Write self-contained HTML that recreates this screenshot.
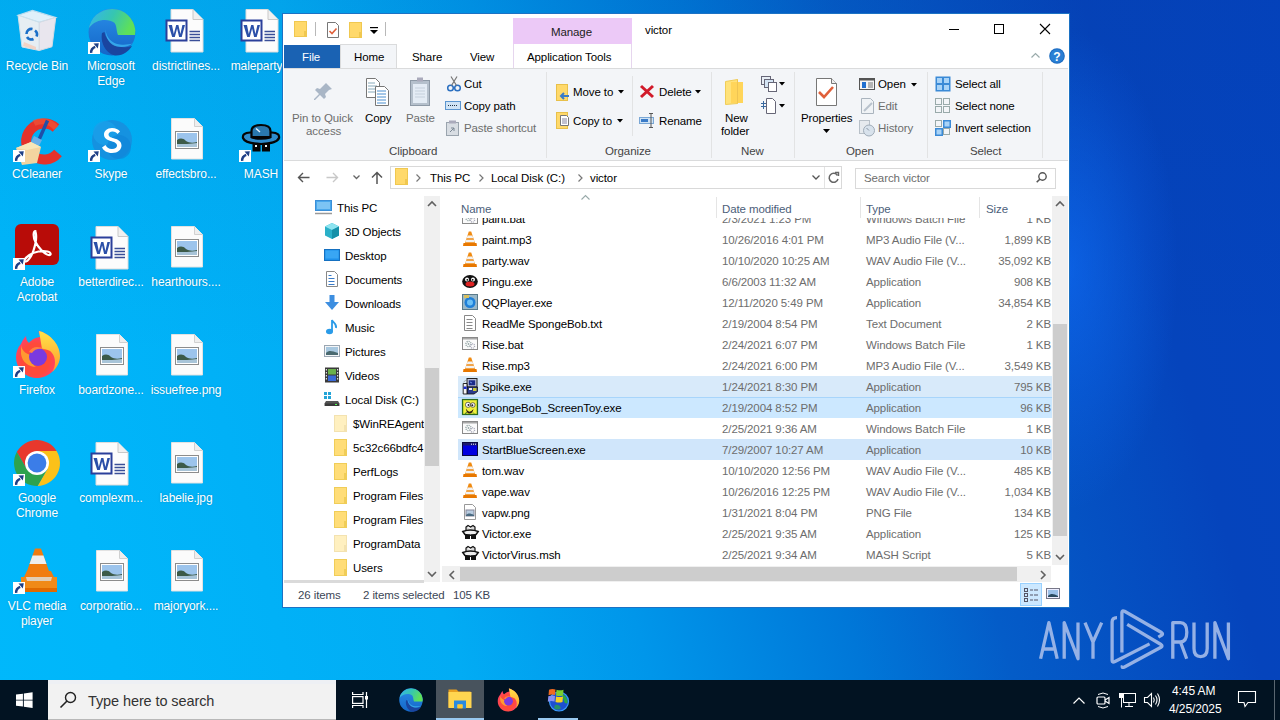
<!DOCTYPE html>
<html><head><meta charset="utf-8"><style>
*{box-sizing:border-box;margin:0;padding:0}
html,body{width:1280px;height:720px;overflow:hidden}
body{position:relative;font-family:"Liberation Sans",sans-serif;font-size:12px;color:#000;
background:radial-gradient(ellipse 110px 240px at 1068px 270px,rgba(16,110,250,.6),rgba(16,110,250,0) 100%),linear-gradient(to bottom,rgba(0,30,90,.06),rgba(0,0,0,0) 50%),linear-gradient(75deg,#00b8fb 0%,#00b6fa 9%,#02acf4 32%,#0096ea 45%,#0077d8 59.4%,#045cc8 69.6%,#0544bc 86.6%,#0444c0 100%)}
.a{position:absolute}
.t{position:absolute;white-space:nowrap;line-height:14px;font-size:11.5px;letter-spacing:-0.1px}
.dl{position:absolute;white-space:nowrap;color:#fff;font-size:12px;line-height:15px;text-align:center;width:76px;letter-spacing:-0.1px;text-shadow:0 0 2px rgba(0,0,0,.22)}
.g{color:#6d6d6d}
.sel{position:absolute;background:#cde8fd}
svg{position:absolute;overflow:visible}
</style></head><body>
<svg style="left:14px;top:8px" width="44" height="46" viewBox="0 0 44 46"><path d="M4 7.2L18.5 2.4 41.75 9.5 25.25 14.4z" fill="#dff0fa" stroke="#b8dcef" stroke-width="1.2"/><path d="M4 7.2L25.25 14.4 25.25 42.5 8 39z" fill="#e6eef3" stroke="#cfe0ea"/><path d="M25.25 14.4L41.75 9.5 38 38.75 25.25 42.5z" fill="#e9e6ee" stroke="#d6dbe4"/><path d="M10 34l12 5v3L9 38z" fill="#f6c8b0" opacity=".7"/><g fill="none" stroke="#1a6fc8" stroke-width="2.6"><path d="M12.5 26a5 5 0 0 1 6-5"/><path d="M21 22.5a5 5 0 0 1 1.5 6"/><path d="M19.5 31a5 5 0 0 1-6.5-2"/></g></svg>
<div class="dl" style="left:-3px;width:80px;top:58.75px">Recycle Bin</div>
<svg style="left:14px;top:118px" width="48" height="46" viewBox="0 0 48 46"><path d="M42 10A18 18 0 1 0 44 35" stroke="#e5322a" stroke-width="10" fill="none"/><path d="M42 10A18 18 0 0 0 20 5" stroke="#f05a3a" stroke-width="6" fill="none" opacity=".6"/><path d="M33.5 2.5L24 24" stroke="#1f4fa8" stroke-width="3.4"/><path d="M20 18l8 4-3 6-8-4z" fill="#6ab0e8"/><path d="M2 30l15-6 10 5-4 16-15 2z" fill="#f3d4a0"/><path d="M2 30l15-6 10 5-14 3z" fill="#f8e6b8"/></svg>
<svg style="left:13px;top:150px" width="12" height="12" viewBox="0 0 12 12"><rect x="0" y="0" width="12" height="12" fill="#fff"/><path d="M3.2 10.8Q2.8 6.5 7.2 4.8" stroke="#1e3f86" stroke-width="2.4" fill="none"/><path d="M5.5 1.5L10.8 1.2 9.8 6.5z" fill="#1e3f86"/></svg>
<div class="dl" style="left:-3px;width:80px;top:166.75px">CCleaner</div>
<svg style="left:15px;top:224px" width="44" height="42" viewBox="0 0 44 42"><rect x="0" y="0" width="44" height="41" rx="6" fill="#b80c08"/><path d="M20.5 7c-2.5 0-2.5 6 0 11s8.5 12 13 13c3 .5 3-2.5-1-3.5-5-1.2-13 0-18 3.5s-6 6-4 6.5 6-5 8-11 3-12 2.5-16c-.2-1.5-.7-3.5-.5-3.5z" fill="none" stroke="#fff" stroke-width="2.2" stroke-linejoin="round"/></svg>
<svg style="left:13px;top:258px" width="12" height="12" viewBox="0 0 12 12"><rect x="0" y="0" width="12" height="12" fill="#fff"/><path d="M3.2 10.8Q2.8 6.5 7.2 4.8" stroke="#1e3f86" stroke-width="2.4" fill="none"/><path d="M5.5 1.5L10.8 1.2 9.8 6.5z" fill="#1e3f86"/></svg>
<div class="dl" style="left:-3px;width:80px;top:274.75px">Adobe</div>
<div class="dl" style="left:-3px;width:80px;top:289.75px">Acrobat</div>
<svg style="left:15px;top:330px" width="46" height="47" viewBox="0 0 46 47"><defs><radialGradient id="ffr" cx=".45" cy=".6" r=".6"><stop offset=".55" stop-color="#ff4a3a"/><stop offset="1" stop-color="#ff3b8a"/></radialGradient><linearGradient id="ffy" x1="0" y1="0" x2="0" y2="1"><stop offset="0" stop-color="#ffe44a"/><stop offset="1" stop-color="#ff9a2a"/></linearGradient></defs><path d="M6 14c2-5 5-8 5-8 0 4 2 6 3 7 3-4 8-6 12-6-2-3-3-5-2-6 9 2 20 12 20 25 0 12-10 22-22 22S1 38 1 27c0-5 2-10 5-13z" fill="url(#ffr)"/><path d="M24 1c9 2 21 12 21 25 0 6-3 12-8 16 4-6 4-14 0-19-2-3-6-4-10-4z" fill="url(#ffy)"/><path d="M6 15c1 8 9 11 14 10-4 3-4 9 1 12-7 0-14-5-15-13z" fill="#ff9a30"/><circle cx="23" cy="27" r="9" fill="#7a3ae0"/><path d="M14 22c3-6 10-6 15-3-5-1-10 0-12 4z" fill="#ff8040"/></svg>
<svg style="left:13px;top:366px" width="12" height="12" viewBox="0 0 12 12"><rect x="0" y="0" width="12" height="12" fill="#fff"/><path d="M3.2 10.8Q2.8 6.5 7.2 4.8" stroke="#1e3f86" stroke-width="2.4" fill="none"/><path d="M5.5 1.5L10.8 1.2 9.8 6.5z" fill="#1e3f86"/></svg>
<div class="dl" style="left:-3px;width:80px;top:382.75px">Firefox</div>
<svg style="left:13px;top:439px" width="48" height="48" viewBox="0 0 48 48"><path d="M24.00 12.00L43.62 12.00A23 23 0 0 0 3.80 13.01L13.61 30.00z" fill="#e8382c"/><path d="M34.39 30.00L24.58 46.99A23 23 0 0 0 43.62 12.00L24.00 12.00z" fill="#fbc119"/><path d="M13.61 30.00L3.80 13.01A23 23 0 0 0 24.58 46.99L34.39 30.00z" fill="#2ea24e"/><circle cx="24" cy="24" r="12" fill="#fff"/><circle cx="24" cy="24" r="9.4" fill="#3b7de8"/></svg>
<svg style="left:13px;top:474px" width="12" height="12" viewBox="0 0 12 12"><rect x="0" y="0" width="12" height="12" fill="#fff"/><path d="M3.2 10.8Q2.8 6.5 7.2 4.8" stroke="#1e3f86" stroke-width="2.4" fill="none"/><path d="M5.5 1.5L10.8 1.2 9.8 6.5z" fill="#1e3f86"/></svg>
<div class="dl" style="left:-3px;width:80px;top:490.75px">Google</div>
<div class="dl" style="left:-3px;width:80px;top:505.75px">Chrome</div>
<svg style="left:21px;top:547px" width="36" height="46" viewBox="0 0 36 46"><path d="M14 1.5h6l11 31H3z" fill="#f07c10"/><path d="M11.5 8.5h11l3 8.5h-17z" fill="#eee"/><path d="M7.5 24.5h19l2.5 9H5z" fill="#eee"/><path d="M0 30h36v15H0z" fill="#f08a18"/><path d="M3 30l3-6h24l3 6z" fill="#f07c10"/><path d="M5 30h26l-1 4H6z" fill="#ddd" opacity=".8"/><rect x="0" y="41" width="36" height="4" fill="#e06a00"/></svg>
<svg style="left:13px;top:582px" width="12" height="12" viewBox="0 0 12 12"><rect x="0" y="0" width="12" height="12" fill="#fff"/><path d="M3.2 10.8Q2.8 6.5 7.2 4.8" stroke="#1e3f86" stroke-width="2.4" fill="none"/><path d="M5.5 1.5L10.8 1.2 9.8 6.5z" fill="#1e3f86"/></svg>
<div class="dl" style="left:-3px;width:80px;top:598.75px">VLC media</div>
<div class="dl" style="left:-3px;width:80px;top:613.75px">player</div>
<svg style="left:88px;top:8px" width="48" height="48" viewBox="0 0 48 48"><defs><linearGradient id="eg1" x1="0" y1="0" x2="1" y2=".3"><stop offset="0" stop-color="#35b4f2"/><stop offset=".55" stop-color="#36c6b0"/><stop offset="1" stop-color="#5ee05a"/></linearGradient><linearGradient id="eg2" x1="0" y1="0" x2="0" y2="1"><stop offset="0" stop-color="#2a8ee8"/><stop offset="1" stop-color="#1466c8"/></linearGradient></defs><circle cx="24" cy="24" r="23.5" fill="url(#eg2)"/><path d="M.6 22A23.5 23.5 0 0 1 47.4 22.5L47 27H30C28 22 29 17 26 14.5 20 10 7 11 1 20z" fill="url(#eg1)"/><path d="M14 25C12 36 19 46 27 47.4 35 48 41 43 44 38 38 40 30 40 25 36 20 33 17 28 16.5 24z" fill="#1a45a0"/><path d="M17.5 21C18 30 24 35.5 32 36.5 37 37 41 36.5 44.5 35.5 41 38.5 35 39.5 29 38.5 22 37 17 30 17.5 21z" fill="#3ab0f0" opacity=".85"/></svg>
<svg style="left:88px;top:42px" width="12" height="12" viewBox="0 0 12 12"><rect x="0" y="0" width="12" height="12" fill="#fff"/><path d="M3.2 10.8Q2.8 6.5 7.2 4.8" stroke="#1e3f86" stroke-width="2.4" fill="none"/><path d="M5.5 1.5L10.8 1.2 9.8 6.5z" fill="#1e3f86"/></svg>
<div class="dl" style="left:71px;width:80px;top:58.75px">Microsoft</div>
<div class="dl" style="left:71px;width:80px;top:73.75px">Edge</div>
<svg style="left:90px;top:118px" width="44" height="44" viewBox="0 0 44 44"><circle cx="22" cy="22" r="20" fill="#1592e0"/><circle cx="15" cy="15" r="12" fill="#1aa0ea" opacity=".8"/><circle cx="29" cy="29" r="12" fill="#0f86d8" opacity=".7"/><path d="M30 13.5c-1.5-2-4.5-3.5-8-3.5-5 0-8 3-8 6.5 0 8 13 5.5 13 11 0 2-2 3.5-5 3.5-3.5 0-5.5-2-6.5-4l-3.5 2.5c1.5 3 5 5.5 10 5.5 6 0 9.5-3.5 9.5-7.5 0-8.5-13-6-13-11 0-1.5 1.5-3 4-3 2.5 0 4 1 5 2.5z" fill="#fff"/></svg>
<svg style="left:88px;top:150px" width="12" height="12" viewBox="0 0 12 12"><rect x="0" y="0" width="12" height="12" fill="#fff"/><path d="M3.2 10.8Q2.8 6.5 7.2 4.8" stroke="#1e3f86" stroke-width="2.4" fill="none"/><path d="M5.5 1.5L10.8 1.2 9.8 6.5z" fill="#1e3f86"/></svg>
<div class="dl" style="left:71px;width:80px;top:166.75px">Skype</div>
<svg style="left:90px;top:226px" width="40" height="44" viewBox="0 0 40 44"><path d="M6 .5h22l10 10v32.5H6z" fill="#fcfcfc" stroke="#dcdcdc"/><path d="M28 .5v10h10" fill="#f0f0f0" stroke="#c8c8c8"/><rect x="1.5" y="11.5" width="20" height="20" fill="#fff" stroke="#2b3f9a" stroke-width="2"/><path d="M3.5 16h3.5l1.8 9 2.4-9h2.2l2 9 2-9h2.6l-3.3 12h-2.6l-2-8.5-2.3 8.5H7.2z" fill="#2b4fa8"/><path d="M24.5 22.5h10.5M24.5 25.5h10.5M24.5 28.5h10.5M24.5 31.5h10.5" stroke="#3a4f98" stroke-width="1.3"/></svg>
<div class="dl" style="left:71px;width:80px;top:274.75px">betterdirec...</div>
<svg style="left:96px;top:334px" width="32" height="42" viewBox="0 0 32 42"><path d="M.5 .5h23l8 8v32.5H.5z" fill="#fbfbfb" stroke="#e2e2e2"/><path d="M23.5 .5v8h8" fill="#eee" stroke="#d0d0d0"/><rect x="4.5" y="13.5" width="23" height="17" fill="#fff" stroke="#8c8c8c"/><rect x="6" y="15" width="20" height="14" fill="#9cc4ec"/><path d="M6 22c3-2 6-2 9 1 3 2 7 2 11 1v5H6z" fill="#3c5a48"/><path d="M6 26c6 0 14 0 20-1v4H6z" fill="#a8c4d8"/></svg>
<div class="dl" style="left:71px;width:80px;top:382.75px">boardzone...</div>
<svg style="left:90px;top:442px" width="40" height="44" viewBox="0 0 40 44"><path d="M6 .5h22l10 10v32.5H6z" fill="#fcfcfc" stroke="#dcdcdc"/><path d="M28 .5v10h10" fill="#f0f0f0" stroke="#c8c8c8"/><rect x="1.5" y="11.5" width="20" height="20" fill="#fff" stroke="#2b3f9a" stroke-width="2"/><path d="M3.5 16h3.5l1.8 9 2.4-9h2.2l2 9 2-9h2.6l-3.3 12h-2.6l-2-8.5-2.3 8.5H7.2z" fill="#2b4fa8"/><path d="M24.5 22.5h10.5M24.5 25.5h10.5M24.5 28.5h10.5M24.5 31.5h10.5" stroke="#3a4f98" stroke-width="1.3"/></svg>
<div class="dl" style="left:71px;width:80px;top:490.75px">complexm...</div>
<svg style="left:96px;top:550px" width="32" height="42" viewBox="0 0 32 42"><path d="M.5 .5h23l8 8v32.5H.5z" fill="#fbfbfb" stroke="#e2e2e2"/><path d="M23.5 .5v8h8" fill="#eee" stroke="#d0d0d0"/><rect x="4.5" y="13.5" width="23" height="17" fill="#fff" stroke="#8c8c8c"/><rect x="6" y="15" width="20" height="14" fill="#9cc4ec"/><path d="M6 22c3-2 6-2 9 1 3 2 7 2 11 1v5H6z" fill="#3c5a48"/><path d="M6 26c6 0 14 0 20-1v4H6z" fill="#a8c4d8"/></svg>
<div class="dl" style="left:71px;width:80px;top:598.75px">corporatio...</div>
<svg style="left:165px;top:9px" width="40" height="44" viewBox="0 0 40 44"><path d="M6 .5h22l10 10v32.5H6z" fill="#fcfcfc" stroke="#dcdcdc"/><path d="M28 .5v10h10" fill="#f0f0f0" stroke="#c8c8c8"/><rect x="1.5" y="11.5" width="20" height="20" fill="#fff" stroke="#2b3f9a" stroke-width="2"/><path d="M3.5 16h3.5l1.8 9 2.4-9h2.2l2 9 2-9h2.6l-3.3 12h-2.6l-2-8.5-2.3 8.5H7.2z" fill="#2b4fa8"/><path d="M24.5 22.5h10.5M24.5 25.5h10.5M24.5 28.5h10.5M24.5 31.5h10.5" stroke="#3a4f98" stroke-width="1.3"/></svg>
<div class="dl" style="left:146px;width:80px;top:58.75px">districtlines...</div>
<svg style="left:171px;top:118px" width="32" height="42" viewBox="0 0 32 42"><path d="M.5 .5h23l8 8v32.5H.5z" fill="#fbfbfb" stroke="#e2e2e2"/><path d="M23.5 .5v8h8" fill="#eee" stroke="#d0d0d0"/><rect x="4.5" y="13.5" width="23" height="17" fill="#fff" stroke="#8c8c8c"/><rect x="6" y="15" width="20" height="14" fill="#9cc4ec"/><path d="M6 22c3-2 6-2 9 1 3 2 7 2 11 1v5H6z" fill="#3c5a48"/><path d="M6 26c6 0 14 0 20-1v4H6z" fill="#a8c4d8"/></svg>
<div class="dl" style="left:146px;width:80px;top:166.75px">effectsbro...</div>
<svg style="left:171px;top:226px" width="32" height="42" viewBox="0 0 32 42"><path d="M.5 .5h23l8 8v32.5H.5z" fill="#fbfbfb" stroke="#e2e2e2"/><path d="M23.5 .5v8h8" fill="#eee" stroke="#d0d0d0"/><rect x="4.5" y="13.5" width="23" height="17" fill="#fff" stroke="#8c8c8c"/><rect x="6" y="15" width="20" height="14" fill="#9cc4ec"/><path d="M6 22c3-2 6-2 9 1 3 2 7 2 11 1v5H6z" fill="#3c5a48"/><path d="M6 26c6 0 14 0 20-1v4H6z" fill="#a8c4d8"/></svg>
<div class="dl" style="left:146px;width:80px;top:274.75px">hearthours....</div>
<svg style="left:171px;top:334px" width="32" height="42" viewBox="0 0 32 42"><path d="M.5 .5h23l8 8v32.5H.5z" fill="#fbfbfb" stroke="#e2e2e2"/><path d="M23.5 .5v8h8" fill="#eee" stroke="#d0d0d0"/><rect x="4.5" y="13.5" width="23" height="17" fill="#fff" stroke="#8c8c8c"/><rect x="6" y="15" width="20" height="14" fill="#9cc4ec"/><path d="M6 22c3-2 6-2 9 1 3 2 7 2 11 1v5H6z" fill="#3c5a48"/><path d="M6 26c6 0 14 0 20-1v4H6z" fill="#a8c4d8"/></svg>
<div class="dl" style="left:146px;width:80px;top:382.75px">issuefree.png</div>
<svg style="left:171px;top:442px" width="32" height="42" viewBox="0 0 32 42"><path d="M.5 .5h23l8 8v32.5H.5z" fill="#fbfbfb" stroke="#e2e2e2"/><path d="M23.5 .5v8h8" fill="#eee" stroke="#d0d0d0"/><rect x="4.5" y="13.5" width="23" height="17" fill="#fff" stroke="#8c8c8c"/><rect x="6" y="15" width="20" height="14" fill="#9cc4ec"/><path d="M6 22c3-2 6-2 9 1 3 2 7 2 11 1v5H6z" fill="#3c5a48"/><path d="M6 26c6 0 14 0 20-1v4H6z" fill="#a8c4d8"/></svg>
<div class="dl" style="left:146px;width:80px;top:490.75px">labelie.jpg</div>
<svg style="left:171px;top:550px" width="32" height="42" viewBox="0 0 32 42"><path d="M.5 .5h23l8 8v32.5H.5z" fill="#fbfbfb" stroke="#e2e2e2"/><path d="M23.5 .5v8h8" fill="#eee" stroke="#d0d0d0"/><rect x="4.5" y="13.5" width="23" height="17" fill="#fff" stroke="#8c8c8c"/><rect x="6" y="15" width="20" height="14" fill="#9cc4ec"/><path d="M6 22c3-2 6-2 9 1 3 2 7 2 11 1v5H6z" fill="#3c5a48"/><path d="M6 26c6 0 14 0 20-1v4H6z" fill="#a8c4d8"/></svg>
<div class="dl" style="left:146px;width:80px;top:598.75px">majoryork....</div>
<svg style="left:240px;top:9px" width="40" height="44" viewBox="0 0 40 44"><path d="M6 .5h22l10 10v32.5H6z" fill="#fcfcfc" stroke="#dcdcdc"/><path d="M28 .5v10h10" fill="#f0f0f0" stroke="#c8c8c8"/><rect x="1.5" y="11.5" width="20" height="20" fill="#fff" stroke="#2b3f9a" stroke-width="2"/><path d="M3.5 16h3.5l1.8 9 2.4-9h2.2l2 9 2-9h2.6l-3.3 12h-2.6l-2-8.5-2.3 8.5H7.2z" fill="#2b4fa8"/><path d="M24.5 22.5h10.5M24.5 25.5h10.5M24.5 28.5h10.5M24.5 31.5h10.5" stroke="#3a4f98" stroke-width="1.3"/></svg>
<div class="dl" style="left:221px;width:80px;top:58.75px">maleparty...</div>
<svg style="left:241px;top:123px" width="40" height="30" viewBox="0 0 40 30"><path d="M2 15Q1 10 9 9.5L31 9.5Q39 10 38 15Q36 20.5 20 21Q4 20.5 2 15z" fill="#2e8ccc" stroke="#050505" stroke-width="2.2"/><path d="M10.5 14V8Q10.5 2 20 2Q29.5 2 29.5 8V14z" fill="#2a78ae" stroke="#050505" stroke-width="2.2"/><path d="M15 5.5l4 3.5" stroke="#e8f4ff" stroke-width="1.4"/><path d="M10.5 14.5Q20 17 29.5 14.5" stroke="#050505" stroke-width="2.2" fill="none"/><path d="M11.5 20.5h8v8h-8zM21 20.5h8v8h-8z" fill="#050505"/><rect x="14" y="22" width="2" height="2" fill="#f0f0f0"/><rect x="24" y="22" width="2" height="2" fill="#f0f0f0"/></svg>
<svg style="left:239px;top:150px" width="12" height="12" viewBox="0 0 12 12"><rect x="0" y="0" width="12" height="12" fill="#fff"/><path d="M3.2 10.8Q2.8 6.5 7.2 4.8" stroke="#1e3f86" stroke-width="2.4" fill="none"/><path d="M5.5 1.5L10.8 1.2 9.8 6.5z" fill="#1e3f86"/></svg>
<div class="dl" style="left:221px;width:80px;top:166.75px">MASH</div>
<div class="a" style="left:282px;top:13px;width:788px;height:595px;background:#fff;border:1px solid #1c72c4"></div>
<svg style="left:294px;top:21px" width="13" height="16" viewBox="0 0 13 16"><rect x="0.5" y="0.5" width="12" height="15" fill="#ffd96b" stroke="#f0c850"/><rect x="10" y="10" width="2" height="5" fill="#f0c850"/></svg>
<div class="a" style="left:315px;top:22px;width:1px;height:14px;background:#b8b8b8"></div>
<svg style="left:327px;top:22px" width="12" height="16" viewBox="0 0 12 16"><path d="M0.5 0.5h8l3 3v12h-11z" fill="#fff" stroke="#777"/><path d="M2.5 9l2.5 2.5 4.5-5" stroke="#e0603a" stroke-width="1.6" fill="none"/></svg>
<svg style="left:349px;top:22px" width="13" height="16" viewBox="0 0 13 16"><rect x="0.5" y="0.5" width="12" height="15" fill="#ffd96b" stroke="#f0c850"/><rect x="10" y="10" width="2" height="5" fill="#f0c850"/></svg>
<svg style="left:370px;top:27px" width="8" height="8" viewBox="0 0 8 8"><rect x="0" y="0" width="8" height="1.2" fill="#000"/><path d="M0 3h8l-4 4z" fill="#000"/></svg>
<div class="a" style="left:385px;top:22px;width:1px;height:14px;background:#b8b8b8"></div>
<div class="a" style="left:513px;top:18px;width:119px;height:26px;background:#ecc9f7"></div>
<div class="t " style="left:551px;top:25px;color:#222">Manage</div>
<div class="t " style="left:645px;top:23px;">victor</div>
<div class="a" style="left:949px;top:29px;width:10px;height:1px;background:#000"></div>
<div class="a" style="left:994px;top:24px;width:10px;height:10px;border:1px solid #000"></div>
<svg style="left:1040px;top:24px" width="10" height="10" viewBox="0 0 10 10"><path d="M0 0L10 10M10 0L0 10" stroke="#000" stroke-width="1.1"/></svg>
<div class="a" style="left:284px;top:45px;width:56px;height:23px;background:#1a62b3"></div>
<div class="t " style="left:302px;top:50px;color:#fff">File</div>
<div class="a" style="left:340px;top:44px;width:57px;height:25px;background:#f3f5f8;border:1px solid #dadbdc;border-bottom:none"></div>
<div class="t " style="left:354px;top:50px;">Home</div>
<div class="t " style="left:412px;top:50px;">Share</div>
<div class="t " style="left:470px;top:50px;">View</div>
<div class="a" style="left:513px;top:44px;width:119px;height:25px;background:#fff;border:1px solid #e6d6ee;border-top:none;border-bottom:none"></div>
<div class="t " style="left:527px;top:50px;">Application Tools</div>
<svg style="left:1031px;top:53px" width="9" height="5" viewBox="0 0 9 5"><path d="M0.5 4.5L4.5 0.5L8.5 4.5" stroke="#9aa" fill="none" stroke-width="1.2"/></svg>
<svg style="left:1049px;top:48px" width="16" height="16" viewBox="0 0 16 16"><circle cx="8" cy="8" r="7.8" fill="#1c6bc0"/><circle cx="8" cy="8" r="6.8" fill="#2a7fd4"/><text x="8" y="12.5" font-family="Liberation Sans" font-weight="bold" font-size="12" fill="#fff" text-anchor="middle">?</text></svg>
<div class="a" style="left:284px;top:68px;width:784px;height:93px;background:#f3f5f8;border-top:1px solid #dadbdc;border-bottom:1px solid #dadbdc"></div>
<div class="a" style="left:546px;top:72px;width:1px;height:86px;background:#e2e3e4"></div>
<div class="a" style="left:711px;top:72px;width:1px;height:86px;background:#e2e3e4"></div>
<div class="a" style="left:794px;top:72px;width:1px;height:86px;background:#e2e3e4"></div>
<div class="a" style="left:927px;top:72px;width:1px;height:86px;background:#e2e3e4"></div>
<div class="a" style="left:1042px;top:72px;width:1px;height:86px;background:#e2e3e4"></div>
<div class="a" style="left:632px;top:76px;width:1px;height:60px;background:#e2e3e4"></div>
<svg style="left:313px;top:82px" width="20" height="20" viewBox="0 0 20 20"><path d="M13 1l6 6-3 1-4 4 1 3-2 2-4-4-5 5-1 0 0-1 5-5-4-4 2-2 3 1 4-4z" fill="#a9b6c6"/></svg>
<div class="t g" style="left:292px;top:111px;">Pin to Quick</div>
<div class="t g" style="left:306px;top:124px;">access</div>
<svg style="left:366px;top:78px" width="24" height="28" viewBox="0 0 24 28"><path d="M0.5 0.5h9l4 4v15h-13z" fill="#fff" stroke="#777"/><g stroke="#8ab" stroke-width="1"><path d="M2 5h7M2 8h9M2 11h9M2 14h9"/></g><path d="M9.5 8.5h9l4 4v15h-13z" fill="#fff" stroke="#777"/><g stroke="#4a8fd0" stroke-width="1"><path d="M11 13h9M11 16h9M11 19h9M11 22h9M11 25h9"/></g></svg>
<div class="t " style="left:365px;top:111px;">Copy</div>
<svg style="left:410px;top:77px" width="20" height="29" viewBox="0 0 20 29"><rect x="0.5" y="3.5" width="19" height="25" fill="#b5c0cc" stroke="#8d99a6"/><rect x="3" y="7" width="14" height="19" fill="#e4ecf5"/><rect x="7" y="0.5" width="6" height="4" fill="#aab"/><g stroke="#c5d0dc"><path d="M5 11h10M5 14h10M5 17h10M5 20h10"/></g></svg>
<div class="t g" style="left:406px;top:111px;">Paste</div>
<svg style="left:447px;top:76px" width="14" height="16" viewBox="0 0 14 16"><circle cx="3.5" cy="12" r="2.8" fill="none" stroke="#2a6fc0" stroke-width="1.5"/><circle cx="10.5" cy="12" r="2.8" fill="none" stroke="#2a6fc0" stroke-width="1.5"/><path d="M4.5 9.5L10 0.5M9.5 9.5L4 0.5" stroke="#777" stroke-width="1.2"/></svg>
<div class="t " style="left:464px;top:77px;">Cut</div>
<svg style="left:445px;top:101px" width="16" height="9" viewBox="0 0 16 9"><rect x="0.5" y="0.5" width="15" height="8" fill="#cfe3f5" stroke="#5b95cf"/><path d="M3 4.5h10" stroke="#234" stroke-width="1" stroke-dasharray="1 1"/></svg>
<div class="t " style="left:464px;top:99px;">Copy path</div>
<svg style="left:446px;top:120px" width="13" height="16" viewBox="0 0 13 16"><rect x="0.5" y="2.5" width="12" height="13" fill="#d8dde3" stroke="#9aa4ae"/><rect x="3" y="0.5" width="7" height="3" fill="#aab"/><path d="M4 12l4-4M5 8h3v3" stroke="#7b8794" fill="none"/></svg>
<div class="t g" style="left:464px;top:121px;">Paste shortcut</div>
<div class="t " style="left:389px;top:144px;color:#444">Clipboard</div>
<svg style="left:556px;top:84px" width="14" height="17" viewBox="0 0 14 17"><rect x="0.5" y="0.5" width="11" height="16" fill="#ffd96b" stroke="#e8c04a"/><path d="M13 12H5M8 9l-3 3 3 3" stroke="#3a7bc8" stroke-width="2" fill="none"/></svg>
<div class="t " style="left:573px;top:85px;">Move to</div>
<svg style="left:618px;top:90px" width="6" height="4" viewBox="0 0 6 4"><path d="M0 0h6l-3 3.5z" fill="#000"/></svg>
<svg style="left:556px;top:112px" width="14" height="17" viewBox="0 0 14 17"><rect x="0.5" y="0.5" width="11" height="16" fill="#ffd96b" stroke="#e8c04a"/><path d="M4.5 3.5h6l2 2v8h-8z" fill="#fff" stroke="#777"/><path d="M6 7h5M6 9h5M6 11h5" stroke="#668" stroke-width=".8"/></svg>
<div class="t " style="left:573px;top:114px;">Copy to</div>
<svg style="left:617px;top:119px" width="6" height="4" viewBox="0 0 6 4"><path d="M0 0h6l-3 3.5z" fill="#000"/></svg>
<svg style="left:640px;top:85px" width="14" height="13" viewBox="0 0 14 13"><path d="M1 1L13 12M13 1L1 12" stroke="#d11a2a" stroke-width="3"/></svg>
<div class="t " style="left:659px;top:85px;">Delete</div>
<svg style="left:695px;top:90px" width="6" height="4" viewBox="0 0 6 4"><path d="M0 0h6l-3 3.5z" fill="#000"/></svg>
<svg style="left:639px;top:113px" width="16" height="15" viewBox="0 0 16 15"><rect x="0.5" y="4.5" width="14" height="6" fill="#cfe3f5" stroke="#7aa7d5"/><rect x="2" y="6" width="7" height="3" fill="#3a7bc8"/><path d="M12 0.5v14M10 0.5h4M10 14.5h4" stroke="#555"/></svg>
<div class="t " style="left:659px;top:114px;">Rename</div>
<div class="t " style="left:605px;top:144px;color:#444">Organize</div>
<svg style="left:725px;top:79px" width="19" height="26" viewBox="0 0 19 26"><path d="M0.5 2.5l12-2v24l-12 1z" fill="#ffe27a" stroke="#f0cd58"/><path d="M6 3h12v21H6z" fill="#ffd55a"/><path d="M12.5 .5v24" stroke="#eec454"/></svg>
<div class="t " style="left:725px;top:111px;">New</div>
<div class="t " style="left:721px;top:124px;">folder</div>
<svg style="left:761px;top:76px" width="24" height="16" viewBox="0 0 24 16"><rect x="0.5" y="0.5" width="9" height="8" fill="#e8eef5" stroke="#667"/><rect x="3.5" y="3.5" width="9" height="8" fill="#d5e5f5" stroke="#667"/><rect x="7.5" y="6.5" width="8" height="9" fill="#fff" stroke="#667"/><path d="M18 6h6l-3 3.5z" fill="#000"/></svg>
<svg style="left:761px;top:98px" width="24" height="16" viewBox="0 0 24 16"><path d="M5.5 .5h6l3 3v12h-9z" fill="#fff" stroke="#667"/><path d="M0 5.5h5M0 8.5h5M2.5 3v8" stroke="#3a6aa0" stroke-width="1"/><path d="M18 6h6l-3 3.5z" fill="#000"/></svg>
<div class="t " style="left:741px;top:144px;color:#444">New</div>
<svg style="left:816px;top:78px" width="21" height="28" viewBox="0 0 21 28"><path d="M0.5 .5h15l5 5v22h-20z" fill="#fff" stroke="#777"/><path d="M15.5 .5v5h5" fill="#eee" stroke="#777"/><path d="M3 14l5 5 9-10" stroke="#e0603a" stroke-width="2.6" fill="none"/></svg>
<div class="t " style="left:801px;top:111px;">Properties</div>
<svg style="left:823px;top:129px" width="7" height="4" viewBox="0 0 7 4"><path d="M0 0h7l-3.5 4z" fill="#000"/></svg>
<svg style="left:859px;top:78px" width="16" height="12" viewBox="0 0 16 12"><rect x="0.5" y="0.5" width="15" height="11" fill="#f4f4f4" stroke="#555"/><rect x="0.5" y=".5" width="15" height="2" fill="#555"/><rect x="3" y="4" width="4" height="6" fill="#1f6fd0"/><path d="M9 5h5M9 7h5M9 9h5" stroke="#555" stroke-width=".8"/></svg>
<div class="t " style="left:878px;top:77px;">Open</div>
<svg style="left:911px;top:83px" width="6" height="4" viewBox="0 0 6 4"><path d="M0 0h6l-3 3.5z" fill="#000"/></svg>
<svg style="left:861px;top:98px" width="14" height="16" viewBox="0 0 14 16"><path d="M.5 .5h9l3 3v12h-12z" fill="#f0f3f6" stroke="#aab4be"/><path d="M3 13l8-8" stroke="#b8c2cc" stroke-width="2"/></svg>
<div class="t g" style="left:878px;top:99px;">Edit</div>
<svg style="left:859px;top:120px" width="17" height="16" viewBox="0 0 17 16"><rect x=".5" y=".5" width="10" height="13" fill="#e6eaee" stroke="#b8c0c8"/><circle cx="10" cy="10.5" r="5.5" fill="#d8e2ec" stroke="#a0acb8"/><path d="M10 10.5l-2.5-2.5" stroke="#8896a4"/></svg>
<div class="t g" style="left:878px;top:121px;">History</div>
<div class="t " style="left:846px;top:144px;color:#444">Open</div>
<svg style="left:935px;top:76px" width="16" height="16" viewBox="0 0 16 16"><rect x=".5" y=".5" width="15" height="15" fill="#3b8ad6"/><rect x="2" y="2" width="5" height="5" fill="#a9d3f7"/><rect x="9" y="2" width="5" height="5" fill="#a9d3f7"/><rect x="2" y="9" width="5" height="5" fill="#a9d3f7"/><rect x="9" y="9" width="5" height="5" fill="#a9d3f7"/></svg>
<div class="t " style="left:955px;top:77px;">Select all</div>
<svg style="left:935px;top:98px" width="16" height="16" viewBox="0 0 16 16"><g fill="none" stroke="#9aa"><rect x=".5" y=".5" width="6" height="6"/><rect x="8.5" y=".5" width="6" height="6"/><rect x=".5" y="8.5" width="6" height="6"/><rect x="8.5" y="8.5" width="6" height="6"/></g></svg>
<div class="t " style="left:955px;top:99px;">Select none</div>
<svg style="left:935px;top:120px" width="16" height="16" viewBox="0 0 16 16"><g fill="none" stroke="#9aa"><rect x=".5" y=".5" width="6" height="6"/><rect x="8.5" y="8.5" width="6" height="6"/></g><rect x="8" y="0" width="8" height="8" fill="#3b8ad6"/><rect x="9.5" y="1.5" width="5" height="5" fill="#a9d3f7"/><rect x="0" y="8" width="8" height="8" fill="#3b8ad6"/><rect x="1.5" y="9.5" width="5" height="5" fill="#a9d3f7"/></svg>
<div class="t " style="left:955px;top:121px;">Invert selection</div>
<div class="t " style="left:970px;top:144px;color:#444">Select</div>
<svg style="left:297px;top:172px" width="13" height="11" viewBox="0 0 13 11"><path d="M12.5 5.5H1.5M6 1L1.5 5.5 6 10" stroke="#555" stroke-width="1.4" fill="none"/></svg>
<svg style="left:326px;top:172px" width="13" height="11" viewBox="0 0 13 11"><path d="M.5 5.5h11M7 1l4.5 4.5L7 10" stroke="#c8c8c8" stroke-width="1.4" fill="none"/></svg>
<svg style="left:353px;top:175px" width="7" height="5" viewBox="0 0 7 5"><path d="M.5 .5l3 3 3-3" stroke="#666" stroke-width="1.3" fill="none"/></svg>
<svg style="left:371px;top:171px" width="12" height="13" viewBox="0 0 12 13"><path d="M6 13V1.5M1 6.5l5-5 5 5" stroke="#555" stroke-width="1.5" fill="none"/></svg>
<div class="a" style="left:390px;top:166px;width:452px;height:23px;border:1px solid #d9d9d9;background:#fff"></div>
<div class="a" style="left:824px;top:167px;width:1px;height:21px;background:#e3e3e3"></div>
<svg style="left:395px;top:168px" width="13" height="17" viewBox="0 0 13 17"><rect x="0.5" y="0.5" width="12" height="16" fill="#ffd96b" stroke="#f0c850"/><rect x="10" y="11" width="2" height="5" fill="#f0c850"/></svg>
<svg style="left:416px;top:174px" width="5" height="8" viewBox="0 0 5 8"><path d="M.5 .5l3.5 3.5L.5 7.5" stroke="#777" stroke-width="1.2" fill="none"/></svg>
<div class="t " style="left:430px;top:171px;">This PC</div>
<svg style="left:479px;top:174px" width="5" height="8" viewBox="0 0 5 8"><path d="M.5 .5l3.5 3.5L.5 7.5" stroke="#777" stroke-width="1.2" fill="none"/></svg>
<div class="t " style="left:491px;top:171px;">Local Disk (C:)</div>
<svg style="left:578px;top:174px" width="5" height="8" viewBox="0 0 5 8"><path d="M.5 .5l3.5 3.5L.5 7.5" stroke="#777" stroke-width="1.2" fill="none"/></svg>
<div class="t " style="left:590px;top:171px;">victor</div>
<svg style="left:812px;top:175px" width="8" height="5" viewBox="0 0 8 5"><path d="M.5 .5l3.5 3.5 3.5-3.5" stroke="#555" stroke-width="1.3" fill="none"/></svg>
<svg style="left:828px;top:172px" width="12" height="12" viewBox="0 0 12 12"><path d="M9.5 3.5A4.5 4.5 0 1 0 10 7" stroke="#666" stroke-width="1.5" fill="none"/><path d="M7 0.5h3.5v3.5" stroke="#666" stroke-width="1.4" fill="none"/></svg>
<div class="a" style="left:855px;top:168px;width:201px;height:21px;border:1px solid #d9d9d9;background:#fff"></div>
<div class="t g" style="left:864px;top:171px;">Search victor</div>
<svg style="left:1036px;top:172px" width="11" height="11" viewBox="0 0 11 11"><circle cx="6.5" cy="4.5" r="3.7" fill="none" stroke="#555" stroke-width="1.4"/><path d="M4 7L.7 10.3" stroke="#555" stroke-width="1.6"/></svg>
<div class="a" style="left:284px;top:196px;width:140px;height:384px;overflow:hidden">
<svg style="left:31px;top:3px" width="17" height="16"><rect x=".5" y="1.5" width="16" height="10" fill="#4aa8ec" stroke="#3a8fd8"/><rect x="2" y="3" width="13" height="7" fill="#7cc4f4"/><path d="M0 14.5h17" stroke="#999" stroke-width="1.5"/></svg>
<div class="t" style="left:53px;top:4.5px">This PC</div>
<svg style="left:40px;top:27px" width="16" height="16"><path d="M8 0l7 3.5v9L8 16 1 12.5v-9z" fill="#2ab0c8"/><path d="M1 3.5L8 7l7-3.5L8 0z" fill="#8ee4f0"/><path d="M8 7v9l7-3.5v-9z" fill="#1590a8"/></svg>
<div class="t" style="left:61px;top:28.5px">3D Objects</div>
<svg style="left:40px;top:51px" width="16" height="16"><rect x=".5" y="2.5" width="15" height="11" fill="#1e90ea" stroke="#1570c0"/><rect x="1.5" y="3.5" width="13" height="8" fill="#39a6f4"/></svg>
<div class="t" style="left:61px;top:52.5px">Desktop</div>
<svg style="left:40px;top:75px" width="16" height="16"><path d="M2.5 .5h8l3 3v12h-11z" fill="#fff" stroke="#888"/><path d="M4.5 4.5h3M4.5 7.5h6M4.5 10.5h6M4.5 13.5h6" stroke="#3a7bc8" stroke-width="1"/></svg>
<div class="t" style="left:61px;top:76.5px">Documents</div>
<svg style="left:40px;top:99px" width="16" height="16"><path d="M5.5 0h5v7h4.5L8 15 1 7h4.5z" fill="#3d8ee0"/></svg>
<div class="t" style="left:61px;top:100.5px">Downloads</div>
<svg style="left:40px;top:123px" width="16" height="16"><ellipse cx="5.5" cy="12.5" rx="3.5" ry="2.8" fill="#2a9be8"/><path d="M8 12V1c1 3 5 3.5 4 8" stroke="#2a9be8" stroke-width="1.8" fill="none"/></svg>
<div class="t" style="left:61px;top:124.5px">Music</div>
<svg style="left:40px;top:147px" width="16" height="16"><rect x=".5" y="2.5" width="15" height="11" fill="#f4f6f8" stroke="#9aa6b2"/><rect x="2" y="4" width="12" height="8" fill="#a8c8e0"/><path d="M2 10c3-3 6-2 12 0v2H2z" fill="#4a6a70"/></svg>
<div class="t" style="left:61px;top:148.5px">Pictures</div>
<svg style="left:40px;top:171px" width="16" height="16"><rect x="1" y=".5" width="14" height="15" fill="#3a3a3a"/><rect x="4" y="2" width="8" height="5.5" fill="#6ab04c"/><rect x="4" y="8.5" width="8" height="5.5" fill="#3a6ad8"/><g fill="#ddd"><rect x="1.8" y="2" width="1.2" height="1.5"/><rect x="1.8" y="5" width="1.2" height="1.5"/><rect x="1.8" y="8" width="1.2" height="1.5"/><rect x="1.8" y="11" width="1.2" height="1.5"/><rect x="13" y="2" width="1.2" height="1.5"/><rect x="13" y="5" width="1.2" height="1.5"/><rect x="13" y="8" width="1.2" height="1.5"/><rect x="13" y="11" width="1.2" height="1.5"/></g></svg>
<div class="t" style="left:61px;top:172.5px">Videos</div>
<svg style="left:40px;top:195px" width="16" height="16"><g fill="#23a4d8"><rect x="0" y="1" width="3" height="3"/><rect x="4" y="1" width="3" height="3"/><rect x="0" y="5" width="3" height="3"/><rect x="4" y="5" width="3" height="3"/></g><path d="M2 10h12l1.5 2.5v2.5H.5v-2.5z" fill="#555"/><rect x="1" y="12.5" width="14" height="2.5" fill="#3a3a3a"/><rect x="11" y="13" width="2" height="1" fill="#5f5"/></svg>
<div class="t" style="left:61px;top:196.5px">Local Disk (C:)</div>
<svg style="left:50px;top:219px" width="13" height="17"><rect x=".5" y=".5" width="12" height="16" fill="#fff0c0" stroke="#f3e2b0"/><rect x="10" y="10" width="2" height="6" fill="#f3e2b0"/></svg>
<div class="t" style="left:69px;top:220.5px">$WinREAgent</div>
<svg style="left:50px;top:243px" width="13" height="17"><rect x=".5" y=".5" width="12" height="16" fill="#ffdd78" stroke="#f0cd58"/><rect x="10" y="10" width="2" height="6" fill="#f0cd58"/></svg>
<div class="t" style="left:69px;top:244.5px">5c32c66bdfc4</div>
<svg style="left:50px;top:267px" width="13" height="17"><rect x=".5" y=".5" width="12" height="16" fill="#ffdd78" stroke="#f0cd58"/><rect x="10" y="10" width="2" height="6" fill="#f0cd58"/></svg>
<div class="t" style="left:69px;top:268.5px">PerfLogs</div>
<svg style="left:50px;top:291px" width="13" height="17"><rect x=".5" y=".5" width="12" height="16" fill="#ffdd78" stroke="#f0cd58"/><rect x="10" y="10" width="2" height="6" fill="#f0cd58"/></svg>
<div class="t" style="left:69px;top:292.5px">Program Files</div>
<svg style="left:50px;top:315px" width="13" height="17"><rect x=".5" y=".5" width="12" height="16" fill="#ffdd78" stroke="#f0cd58"/><rect x="10" y="10" width="2" height="6" fill="#f0cd58"/></svg>
<div class="t" style="left:69px;top:316.5px">Program Files (x86)</div>
<svg style="left:50px;top:339px" width="13" height="17"><rect x=".5" y=".5" width="12" height="16" fill="#fff0c0" stroke="#f3e2b0"/><rect x="10" y="10" width="2" height="6" fill="#f3e2b0"/></svg>
<div class="t" style="left:69px;top:340.5px">ProgramData</div>
<svg style="left:50px;top:363px" width="13" height="17"><rect x=".5" y=".5" width="12" height="16" fill="#ffdd78" stroke="#f0cd58"/><rect x="10" y="10" width="2" height="6" fill="#f0cd58"/></svg>
<div class="t" style="left:69px;top:364.5px">Users</div>
</div>
<div class="a" style="left:424px;top:196px;width:16px;height:386px;background:#f0f0f0"></div>
<div class="a" style="left:425px;top:368px;width:14px;height:98px;background:#cdcdcd"></div>
<svg style="left:427px;top:201px" width="10" height="6" viewBox="0 0 10 6"><path d="M1 5L5 1l4 4" stroke="#606060" stroke-width="1.6" fill="none"/></svg>
<svg style="left:427px;top:571px" width="10" height="6" viewBox="0 0 10 6"><path d="M1 1l4 4 4-4" stroke="#606060" stroke-width="1.6" fill="none"/></svg>
<div class="a" style="left:284px;top:580px;width:140px;height:3px;background:#dadada"></div>
<div class="a" style="left:716px;top:197px;width:1px;height:21px;background:#e5e5e5"></div>
<div class="a" style="left:860px;top:197px;width:1px;height:21px;background:#e5e5e5"></div>
<div class="a" style="left:979px;top:197px;width:1px;height:21px;background:#e5e5e5"></div>
<div class="t " style="left:461px;top:202px;color:#4c607a">Name</div>
<svg style="left:581px;top:195px" width="9" height="5" viewBox="0 0 9 5"><path d="M.5 4.5l4-4 4 4" stroke="#9aa" stroke-width="1.1" fill="none"/></svg>
<div class="t " style="left:722px;top:202px;color:#4c607a">Date modified</div>
<div class="t " style="left:866px;top:202px;color:#4c607a">Type</div>
<div class="t " style="left:986px;top:202px;color:#4c607a">Size</div>
<div class="a" style="left:445px;top:218px;width:607px;height:347px;overflow:hidden">
<svg style="left:17px;top:-8px" width="16" height="16"><rect x=".5" y="1.5" width="15" height="12" fill="#fbfbfb" stroke="#8a8a8a"/><rect x="1" y="2" width="14" height="1.5" fill="#a8a8a8"/><circle cx="6.5" cy="8" r="2.6" fill="none" stroke="#9aa" stroke-width="1.4" stroke-dasharray="1.2 .8"/><circle cx="6.5" cy="8" r=".9" fill="#9aa"/><circle cx="10.5" cy="10" r="2.1" fill="none" stroke="#aab" stroke-width="1.3" stroke-dasharray="1 .7"/></svg>
<div class="t" style="left:37px;top:-6px">paint.bat</div>
<div class="t g" style="left:277px;top:-6px">2/3/2021 1:23 PM</div>
<div class="t g" style="left:421px;top:-6px">Windows Batch File</div>
<div class="t g" style="left:486px;top:-6px;width:120px;text-align:right">1 KB</div>
<svg style="left:17px;top:13px" width="16" height="16"><path d="M6.8 .5h2.4l3.8 11.5H3z" fill="#f08a10"/><path d="M5.6 4.5h4.8l.9 2.8H4.7z" fill="#f2f2f2"/><path d="M4.2 8.8h7.6l.8 2.5H3.4z" fill="#f2f2f2"/><path d="M1.5 12h13l.5 3H1z" fill="#e87800"/></svg>
<div class="t" style="left:37px;top:15px">paint.mp3</div>
<div class="t g" style="left:277px;top:15px">10/26/2016 4:01 PM</div>
<div class="t g" style="left:421px;top:15px">MP3 Audio File (V...</div>
<div class="t g" style="left:486px;top:15px;width:120px;text-align:right">1,899 KB</div>
<svg style="left:17px;top:34px" width="16" height="16"><path d="M6.8 .5h2.4l3.8 11.5H3z" fill="#f08a10"/><path d="M5.6 4.5h4.8l.9 2.8H4.7z" fill="#f2f2f2"/><path d="M4.2 8.8h7.6l.8 2.5H3.4z" fill="#f2f2f2"/><path d="M1.5 12h13l.5 3H1z" fill="#e87800"/></svg>
<div class="t" style="left:37px;top:36px">party.wav</div>
<div class="t g" style="left:277px;top:36px">10/10/2020 10:25 AM</div>
<div class="t g" style="left:421px;top:36px">WAV Audio File (V...</div>
<div class="t g" style="left:486px;top:36px;width:120px;text-align:right">35,092 KB</div>
<svg style="left:17px;top:55px" width="16" height="16"><ellipse cx="8" cy="8.5" rx="7.8" ry="6.5" fill="#111"/><ellipse cx="8" cy="11" rx="4.5" ry="2.5" fill="#d22"/><circle cx="5" cy="6.5" r="2" fill="#fff"/><circle cx="11" cy="6.5" r="2" fill="#fff"/><circle cx="5.3" cy="6.8" r=".9" fill="#000"/><circle cx="10.7" cy="6.8" r=".9" fill="#000"/></svg>
<div class="t" style="left:37px;top:57px">Pingu.exe</div>
<div class="t g" style="left:277px;top:57px">6/6/2003 11:32 AM</div>
<div class="t g" style="left:421px;top:57px">Application</div>
<div class="t g" style="left:486px;top:57px;width:120px;text-align:right">908 KB</div>
<svg style="left:17px;top:76px" width="16" height="16"><rect x=".5" y=".5" width="15" height="15" fill="#9ab8c8" stroke="#5a7a8a"/><circle cx="8" cy="8.5" r="5.5" fill="#1e7fd8"/><circle cx="8" cy="8.5" r="3" fill="#6cc0f5"/><rect x="2" y="1" width="5" height="3" fill="#d8c060"/></svg>
<div class="t" style="left:37px;top:78px">QQPlayer.exe</div>
<div class="t g" style="left:277px;top:78px">12/11/2020 5:49 PM</div>
<div class="t g" style="left:421px;top:78px">Application</div>
<div class="t g" style="left:486px;top:78px;width:120px;text-align:right">34,854 KB</div>
<svg style="left:17px;top:97px" width="16" height="16"><path d="M2.5 .5h8l3 3v12h-11z" fill="#fff" stroke="#888"/><path d="M4.5 4.5h6M4.5 7.5h6M4.5 10.5h6M4.5 13.5h6" stroke="#8a8a8a" stroke-width="1"/></svg>
<div class="t" style="left:37px;top:99px">ReadMe SpongeBob.txt</div>
<div class="t g" style="left:277px;top:99px">2/19/2004 8:54 PM</div>
<div class="t g" style="left:421px;top:99px">Text Document</div>
<div class="t g" style="left:486px;top:99px;width:120px;text-align:right">2 KB</div>
<svg style="left:17px;top:118px" width="16" height="16"><rect x=".5" y="1.5" width="15" height="12" fill="#fbfbfb" stroke="#8a8a8a"/><rect x="1" y="2" width="14" height="1.5" fill="#a8a8a8"/><circle cx="6.5" cy="8" r="2.6" fill="none" stroke="#9aa" stroke-width="1.4" stroke-dasharray="1.2 .8"/><circle cx="6.5" cy="8" r=".9" fill="#9aa"/><circle cx="10.5" cy="10" r="2.1" fill="none" stroke="#aab" stroke-width="1.3" stroke-dasharray="1 .7"/></svg>
<div class="t" style="left:37px;top:120px">Rise.bat</div>
<div class="t g" style="left:277px;top:120px">2/24/2021 6:07 PM</div>
<div class="t g" style="left:421px;top:120px">Windows Batch File</div>
<div class="t g" style="left:486px;top:120px;width:120px;text-align:right">1 KB</div>
<svg style="left:17px;top:139px" width="16" height="16"><path d="M6.8 .5h2.4l3.8 11.5H3z" fill="#f08a10"/><path d="M5.6 4.5h4.8l.9 2.8H4.7z" fill="#f2f2f2"/><path d="M4.2 8.8h7.6l.8 2.5H3.4z" fill="#f2f2f2"/><path d="M1.5 12h13l.5 3H1z" fill="#e87800"/></svg>
<div class="t" style="left:37px;top:141px">Rise.mp3</div>
<div class="t g" style="left:277px;top:141px">2/24/2021 6:00 PM</div>
<div class="t g" style="left:421px;top:141px">MP3 Audio File (V...</div>
<div class="t g" style="left:486px;top:141px;width:120px;text-align:right">3,549 KB</div>
<div class="sel" style="left:13px;top:158px;width:594px;height:21px;background:#d8eafa;"></div>
<svg style="left:17px;top:160px" width="16" height="16"><rect x="5" y="0.5" width="10" height="8.5" fill="#b8bfd8" stroke="#222" stroke-width="1"/><rect x="6.8" y="2.3" width="6.4" height="5" fill="#1a2a8a"/><path d="M8 4l2 1" stroke="#8af" stroke-width=".8"/><path d="M5 9h10.5v4.5L12 16H5z" fill="#2a3a8a" stroke="#111" stroke-width=".8"/><rect x="11" y="10" width="3.5" height="3" fill="#c8c838"/><rect x="7" y="10" width="3" height="2" fill="#eee"/><path d="M1.2 5.5h3.8v10.5H1.2z" fill="#f4f4f4" stroke="#111" stroke-width=".9"/><rect x="1.6" y="8.5" width="3" height="2.5" fill="#1a2ad0"/><path d="M1.5 4l2-1.5 1.5 1.5" stroke="#999" fill="none" stroke-width=".8"/></svg>
<div class="t" style="left:37px;top:162px">Spike.exe</div>
<div class="t g" style="left:277px;top:162px">1/24/2021 8:30 PM</div>
<div class="t g" style="left:421px;top:162px">Application</div>
<div class="t g" style="left:486px;top:162px;width:120px;text-align:right">795 KB</div>
<div class="sel" style="left:13px;top:179px;width:594px;height:21px;background:#cce8ff;border-top:1px solid #a8d5fb;"></div>
<svg style="left:17px;top:181px" width="16" height="16"><rect x="0.5" y="0.5" width="15" height="15" fill="#d8e030" stroke="#2a6a20" stroke-width="1.2"/><rect x="2" y="2" width="12" height="12" fill="#f0f040"/><circle cx="6" cy="5.8" r="2.6" fill="#fff" stroke="#333" stroke-width=".7"/><circle cx="10.8" cy="6" r="2.3" fill="#fff" stroke="#333" stroke-width=".7"/><circle cx="6.5" cy="6" r="1" fill="#222"/><circle cx="10.3" cy="6.2" r="1" fill="#222"/><path d="M4 9.5q3 6 7.5.5q-1 4.5-4 4.5t-3.5-5z" fill="#2a1a10"/><path d="M3 14.5l2-1M12 14.5l-1-1" stroke="#2a6a20"/></svg>
<div class="t" style="left:37px;top:183px">SpongeBob_ScreenToy.exe</div>
<div class="t g" style="left:277px;top:183px">2/19/2004 8:52 PM</div>
<div class="t g" style="left:421px;top:183px">Application</div>
<div class="t g" style="left:486px;top:183px;width:120px;text-align:right">96 KB</div>
<svg style="left:17px;top:202px" width="16" height="16"><rect x=".5" y="1.5" width="15" height="12" fill="#fbfbfb" stroke="#8a8a8a"/><rect x="1" y="2" width="14" height="1.5" fill="#a8a8a8"/><circle cx="6.5" cy="8" r="2.6" fill="none" stroke="#9aa" stroke-width="1.4" stroke-dasharray="1.2 .8"/><circle cx="6.5" cy="8" r=".9" fill="#9aa"/><circle cx="10.5" cy="10" r="2.1" fill="none" stroke="#aab" stroke-width="1.3" stroke-dasharray="1 .7"/></svg>
<div class="t" style="left:37px;top:204px">start.bat</div>
<div class="t g" style="left:277px;top:204px">2/25/2021 9:36 AM</div>
<div class="t g" style="left:421px;top:204px">Windows Batch File</div>
<div class="t g" style="left:486px;top:204px;width:120px;text-align:right">1 KB</div>
<div class="sel" style="left:13px;top:221px;width:594px;height:21px;background:#d0e6fb;"></div>
<svg style="left:17px;top:223px" width="16" height="16"><rect x=".5" y="1.5" width="15" height="13" fill="#0000e0" stroke="#0a0a40"/><rect x="1" y="2" width="14" height="2.5" fill="#1a1a70"/><g fill="#fff"><rect x="9" y="2.7" width="1" height="1"/><rect x="11" y="2.7" width="1" height="1"/><rect x="13" y="2.7" width="1" height="1"/></g></svg>
<div class="t" style="left:37px;top:225px">StartBlueScreen.exe</div>
<div class="t g" style="left:277px;top:225px">7/29/2007 10:27 AM</div>
<div class="t g" style="left:421px;top:225px">Application</div>
<div class="t g" style="left:486px;top:225px;width:120px;text-align:right">10 KB</div>
<svg style="left:17px;top:244px" width="16" height="16"><path d="M6.8 .5h2.4l3.8 11.5H3z" fill="#f08a10"/><path d="M5.6 4.5h4.8l.9 2.8H4.7z" fill="#f2f2f2"/><path d="M4.2 8.8h7.6l.8 2.5H3.4z" fill="#f2f2f2"/><path d="M1.5 12h13l.5 3H1z" fill="#e87800"/></svg>
<div class="t" style="left:37px;top:246px">tom.wav</div>
<div class="t g" style="left:277px;top:246px">10/10/2020 12:56 PM</div>
<div class="t g" style="left:421px;top:246px">WAV Audio File (V...</div>
<div class="t g" style="left:486px;top:246px;width:120px;text-align:right">485 KB</div>
<svg style="left:17px;top:265px" width="16" height="16"><path d="M6.8 .5h2.4l3.8 11.5H3z" fill="#f08a10"/><path d="M5.6 4.5h4.8l.9 2.8H4.7z" fill="#f2f2f2"/><path d="M4.2 8.8h7.6l.8 2.5H3.4z" fill="#f2f2f2"/><path d="M1.5 12h13l.5 3H1z" fill="#e87800"/></svg>
<div class="t" style="left:37px;top:267px">vape.wav</div>
<div class="t g" style="left:277px;top:267px">10/26/2016 12:25 PM</div>
<div class="t g" style="left:421px;top:267px">WAV Audio File (V...</div>
<div class="t g" style="left:486px;top:267px;width:120px;text-align:right">1,034 KB</div>
<svg style="left:17px;top:286px" width="16" height="16"><path d="M2.5 .5h8l3 3v12h-11z" fill="#fff" stroke="#999"/><rect x="4" y="6" width="8" height="6" fill="#b8cce0" stroke="#889"/><path d="M4 11c2-2 4-2 8 0v1H4z" fill="#4a6a80"/></svg>
<div class="t" style="left:37px;top:288px">vapw.png</div>
<div class="t g" style="left:277px;top:288px">1/31/2021 8:04 PM</div>
<div class="t g" style="left:421px;top:288px">PNG File</div>
<div class="t g" style="left:486px;top:288px;width:120px;text-align:right">134 KB</div>
<svg style="left:17px;top:307px" width="17" height="16"><path d="M4 5.5V2l2-1.5 2.5 1.5 2.5-1.5 2 1.5v3.5z" fill="#d8d8d8" stroke="#111" stroke-width="1.2"/><path d="M6 2l3 2" stroke="#fff"/><path d="M.8 6.5Q8.5 3.5 16.2 6.5L14 9.5Q8.5 11 3 9.5z" fill="#eee" stroke="#111" stroke-width="1.5"/><path d="M3 9.5h5v4.5H3zM9 9.5h5v4.5H9z" fill="#111"/></svg>
<div class="t" style="left:37px;top:309px">Victor.exe</div>
<div class="t g" style="left:277px;top:309px">2/25/2021 9:35 AM</div>
<div class="t g" style="left:421px;top:309px">Application</div>
<div class="t g" style="left:486px;top:309px;width:120px;text-align:right">125 KB</div>
<svg style="left:17px;top:328px" width="17" height="16"><path d="M4 5.5V2l2-1.5 2.5 1.5 2.5-1.5 2 1.5v3.5z" fill="#d8d8d8" stroke="#111" stroke-width="1.2"/><path d="M6 2l3 2" stroke="#fff"/><path d="M.8 6.5Q8.5 3.5 16.2 6.5L14 9.5Q8.5 11 3 9.5z" fill="#eee" stroke="#111" stroke-width="1.5"/><path d="M3 9.5h5v4.5H3zM9 9.5h5v4.5H9z" fill="#111"/></svg>
<div class="t" style="left:37px;top:330px">VictorVirus.msh</div>
<div class="t g" style="left:277px;top:330px">2/25/2021 9:34 AM</div>
<div class="t g" style="left:421px;top:330px">MASH Script</div>
<div class="t g" style="left:486px;top:330px;width:120px;text-align:right">5 KB</div>
</div>
<div class="a" style="left:1052px;top:196px;width:16px;height:369px;background:#f0f0f0"></div>
<div class="a" style="left:1053px;top:324px;width:14px;height:212px;background:#cdcdcd"></div>
<svg style="left:1055px;top:201px" width="10" height="6" viewBox="0 0 10 6"><path d="M1 5L5 1l4 4" stroke="#606060" stroke-width="1.6" fill="none"/></svg>
<svg style="left:1055px;top:554px" width="10" height="6" viewBox="0 0 10 6"><path d="M1 1l4 4 4-4" stroke="#606060" stroke-width="1.6" fill="none"/></svg>
<div class="a" style="left:442px;top:566px;width:609px;height:16px;background:#f0f0f0"></div>
<div class="a" style="left:460px;top:567px;width:557px;height:14px;background:#cdcdcd"></div>
<svg style="left:449px;top:570px" width="6" height="10" viewBox="0 0 6 10"><path d="M5 1L1 5l4 4" stroke="#606060" stroke-width="1.6" fill="none"/></svg>
<svg style="left:1040px;top:570px" width="6" height="10" viewBox="0 0 6 10"><path d="M1 1l4 4-4 4" stroke="#606060" stroke-width="1.6" fill="none"/></svg>
<div class="t " style="left:298px;top:588px;color:#3c4656">26 items</div>
<div class="t " style="left:363px;top:588px;color:#3c4656">2 items selected</div>
<div class="t " style="left:453px;top:588px;color:#3c4656">105 KB</div>
<div class="a" style="left:1020px;top:583px;width:22px;height:23px;background:#cce8ff;border:1px solid #99d1ff"></div>
<svg style="left:1024px;top:587px" width="15" height="15" viewBox="0 0 15 15"><g fill="none" stroke="#556"><rect x=".5" y="1.5" width="3" height="3"/><rect x=".5" y="6.5" width="3" height="3"/><rect x=".5" y="11.5" width="3" height="3"/></g><path d="M6 3h3M10 3h4M6 8h3M10 8h4M6 13h3M10 13h4" stroke="#556"/></svg>
<svg style="left:1046px;top:588px" width="14" height="11" viewBox="0 0 14 11"><rect x=".5" y=".5" width="13" height="10" fill="#eef" stroke="#778"/><rect x="2" y="2" width="10" height="7" fill="#9bc0e8"/><path d="M2 8c3-3 6-2 10 0v1H2z" fill="#2a4a60"/></svg>
<div class="a" style="left:0;top:680px;width:1280px;height:40px;background:#021322"></div>
<svg style="left:15.7px;top:692px" width="16.6" height="16.2" viewBox="0 0 18 17"><path d="M0 2.5l7.5-1v6.5H0zM8.5 1.3L18 0v8H8.5zM0 9h7.5v6.5L0 14.5zM8.5 9H18v8l-9.5-1.3z" fill="#fff"/></svg>
<div class="a" style="left:48px;top:680px;width:288px;height:40px;background:#f2f2f2;border-top:4px solid #eef0f4;border-bottom:1px solid #b8b8b8"></div>
<svg style="left:59px;top:691px" width="18" height="18"><circle cx="11.5" cy="6.5" r="5" fill="none" stroke="#222" stroke-width="1.4"/><path d="M8 10L1.5 16.5" stroke="#222" stroke-width="1.6"/></svg>
<div class="t" style="left:88px;top:693px;font-size:14.5px;line-height:16px;color:#333;letter-spacing:-0.1px">Type here to search</div>
<svg style="left:352px;top:692px" width="16" height="16"><g fill="none" stroke="#fff" stroke-width="1.2"><path d="M.6 0v2.5h10.4V0M.6 16v-2.5h10.4V16M14.5 0v16"/><rect x=".6" y="4.6" width="10.4" height="6.8"/></g><rect x="13" y="4" width="3" height="3.5" fill="#fff"/></svg>
<svg style="left:399px;top:688px" width="24" height="24" viewBox="0 0 48 48"><defs><linearGradient id="teg1" x1="0" y1="0" x2="1" y2=".3"><stop offset="0" stop-color="#35b4f2"/><stop offset=".55" stop-color="#36c6b0"/><stop offset="1" stop-color="#5ee05a"/></linearGradient><linearGradient id="teg2" x1="0" y1="0" x2="0" y2="1"><stop offset="0" stop-color="#2a8ee8"/><stop offset="1" stop-color="#1466c8"/></linearGradient></defs><circle cx="24" cy="24" r="23.5" fill="url(#teg2)"/><path d="M.6 22A23.5 23.5 0 0 1 47.4 22.5L47 27H30C28 22 29 17 26 14.5 20 10 7 11 1 20z" fill="url(#teg1)"/><path d="M14 25C12 36 19 46 27 47.4 35 48 41 43 44 38 38 40 30 40 25 36 20 33 17 28 16.5 24z" fill="#1a45a0"/><path d="M17.5 21C18 30 24 35.5 32 36.5 37 37 41 36.5 44.5 35.5 41 38.5 35 39.5 29 38.5 22 37 17 30 17.5 21z" fill="#3ab0f0" opacity=".85"/></svg>
<div class="a" style="left:436px;top:680px;width:48px;height:40px;background:#48535d"></div>
<div class="a" style="left:436px;top:718px;width:48px;height:2px;background:#99c9f0"></div>
<svg style="left:448px;top:688px" width="24" height="21"><path d="M.5 1.5h8l2 2h12v16H.5z" fill="#e8a020"/><rect x=".5" y="4" width="23" height="16" fill="#ffd550"/><path d="M6 12.5h12v8h-3.5v-4h-5v4H6z" fill="#2a8ae0"/><rect x="9.5" y="16.5" width="5" height="4" fill="#ffc830"/></svg>
<svg style="left:497px;top:688px" width="23" height="23" viewBox="0 0 46 47"><defs><radialGradient id="tffr" cx=".45" cy=".6" r=".6"><stop offset=".55" stop-color="#ff4a3a"/><stop offset="1" stop-color="#ff3b8a"/></radialGradient><linearGradient id="tffy" x1="0" y1="0" x2="0" y2="1"><stop offset="0" stop-color="#ffe44a"/><stop offset="1" stop-color="#ff9a2a"/></linearGradient></defs><path d="M6 14c2-5 5-8 5-8 0 4 2 6 3 7 3-4 8-6 12-6-2-3-3-5-2-6 9 2 20 12 20 25 0 12-10 22-22 22S1 38 1 27c0-5 2-10 5-13z" fill="url(#tffr)"/><path d="M24 1c9 2 21 12 21 25 0 6-3 12-8 16 4-6 4-14 0-19-2-3-6-4-10-4z" fill="url(#tffy)"/><path d="M6 15c1 8 9 11 14 10-4 3-4 9 1 12-7 0-14-5-15-13z" fill="#ff9a30"/><circle cx="23" cy="27" r="9" fill="#7a3ae0"/><path d="M14 22c3-6 10-6 15-3-5-1-10 0-12 4z" fill="#ff8040"/></svg>
<svg style="left:546px;top:688px" width="23" height="23"><circle cx="13" cy="13.5" r="9.5" fill="#1d4fd0"/><circle cx="13" cy="13.5" r="9.5" fill="none" stroke="#3a9af8" stroke-width="1.2"/><path d="M16 6c4 1 6 5 5.5 9-1.5 1-3 0-3.5-2-.5-3-2-4-2-7z" fill="#2aa848"/><path d="M9 17c2-1 5 0 6 3-2 2-5 2-7 0z" fill="#28a050" opacity=".8"/><path d="M3 1.8Q6 .5 9.5 1.5L9 7Q5.5 6 2.5 7.2z" fill="#f06a20"/><path d="M10.5 1.8Q14 2.8 17.5 1.8L17 7.5Q13.5 8.5 10 7.5z" fill="#7ad030"/><path d="M2.3 8.2Q5.5 7 9 8L8.5 13.5Q5 12.5 1.8 13.7z" fill="#8a90f0"/><path d="M10 8.5Q13.5 9.5 17 8.5L16.5 14Q13 15 9.5 14z" fill="#f8d020"/></svg>
<div class="a" style="left:538px;top:718px;width:40px;height:2px;background:#99c9f0"></div>
<svg style="left:1073px;top:697px" width="12" height="7"><path d="M.5 6.5l5.5-5.5 5.5 5.5" stroke="#fff" stroke-width="1.2" fill="none"/></svg>
<svg style="left:1096px;top:692px" width="15" height="17"><rect x="1" y="5" width="8" height="7" rx="1" fill="none" stroke="#fff" stroke-width="1.2"/><path d="M9 8l4-2.5v6L9 9" fill="none" stroke="#fff" stroke-width="1.2"/><path d="M2 2.5q5-3 10 0M2 14.5q5 3 10 0" stroke="#fff" fill="none"/></svg>
<svg style="left:1119px;top:693px" width="17" height="15"><rect x="4.5" y=".5" width="12" height="9" fill="none" stroke="#fff"/><path d="M10 10v3M6 13.5h8M.5 2.5h4M2.5 2.5v12" stroke="#fff"/><rect x="0" y="0" width="4" height="5" fill="#fff"/></svg>
<svg style="left:1143px;top:692px" width="16" height="16"><path d="M1.5 5.5h3l4-4v13l-4-4h-3z" fill="none" stroke="#fff" stroke-width="1.1"/><path d="M10.5 5.5q1.5 2.5 0 5M12.5 3.5q3 4.5 0 9M14.5 1.5q4 6.5 0 13" stroke="#fff" fill="none" stroke-width="1.1"/></svg>
<div class="t" style="left:1172px;top:684px;color:#fff;font-size:12px;line-height:15px;letter-spacing:-0.1px">4:45 AM</div>
<div class="t" style="left:1169px;top:702px;color:#fff;font-size:12px;line-height:15px;letter-spacing:-0.1px">4/25/2025</div>
<svg style="left:1238px;top:691px" width="19" height="17"><path d="M.5 .5h17v11H10l-3 4-1-4H.5z" fill="none" stroke="#fff" stroke-width="1.1"/></svg>
<div class="a" style="left:1274px;top:680px;width:1px;height:40px;background:#5a6670"></div>
<svg style="left:1030px;top:600px" width="210" height="80" viewBox="1030 600 210 80"><g fill="none" stroke="#a2bae8" stroke-opacity=".92" stroke-width="3.3" stroke-linejoin="round" stroke-linecap="butt"><path d="M1040.6 658.75L1048.9 622.6L1057.2 658.75M1044.2 649h9.4"/><path d="M1064.2 658.75V622.6L1078 658.75V622.6"/><path d="M1085 622.6L1093 642L1101.7 622.6M1093 642v16.75"/><path d="M1172.8 658.75V622.6h7.5q6.5 0 6.5 9.7t-6.5 9.7h-7.5M1180.5 642l6.2 16.75"/><path d="M1194 622.6v26q0 8 6.6 8t6.6-8v-26"/><path d="M1214.9 658.75V622.6L1228.4 658.75V622.6"/><path d="M1117 617.6Q1112.1 617.6 1112.1 622V660.5Q1112.1 663 1115 661.5L1149.6 643.9"/><path d="M1121.9 652.6V612.5Q1121.9 610 1124.5 611.3L1161.5 632.5Q1163.5 634 1161.5 635.3L1158.3 637.1"/><path d="M1127.2 624.4L1161 644.5Q1163 646 1161 647.3L1124 667.2Q1121.5 668.2 1122.4 665.5"/></g></svg>
</body></html>
